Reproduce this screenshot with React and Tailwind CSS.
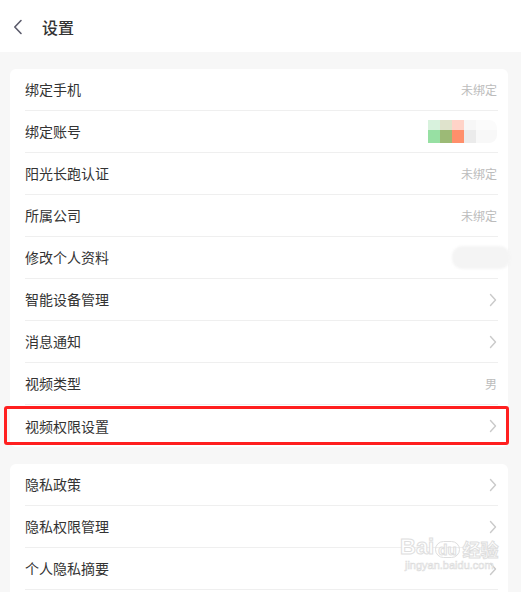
const FONT = "font-['Noto_Sans_CJK_SC','Noto_Sans',sans-serif]"

const group1 = [
  { label: '绑定手机', value: '未绑定' },
  { label: '绑定账号', value: 'mosaic' },
  { label: '阳光长跑认证', value: '未绑定' },
  { label: '所属公司', value: '未绑定' },
  { label: '修改个人资料', value: 'blur' },
  { label: '智能设备管理', arrow: true },
  { label: '消息通知', arrow: true },
  { label: '视频类型', value: '男' },
  { label: '视频权限设置', arrow: true, marked: true },
]

const group2 = [
  { label: '隐私政策', arrow: true },
  { label: '隐私权限管理', arrow: true },
  { label: '个人隐私摘要', arrow: true },
]

function Chevron() {
  return (
    <svg width="8" height="14" viewBox="0 0 8 14" fill="none" className="shrink-0">
      <path d="M1.5 1.5 L6.5 7 L1.5 12.5" stroke="#cacaca" strokeWidth="1.4" strokeLinecap="round" strokeLinejoin="round" />
    </svg>
  )
}

function Mosaic() {
  const top = ['#d8f2dd', '#dfe3cc', '#ffd3c8', '#f7f7f7', '#fbfbfb']
  const mid = ['#97e0a3', '#9cba76', '#ff8f6b', '#ebebeb', '#f8f8f8']
  return (
    <div className="flex flex-col blur-[0.4px]">
      <div className="flex">
        {top.map((c, i) => <div key={i} className={i === 4 ? 'w-[21px] h-[10px] rounded-tr-[8px]' : 'w-[12px] h-[10px]'} style={{ background: c }} />)}
      </div>
      <div className="flex">
        {mid.map((c, i) => <div key={i} className={i === 4 ? 'w-[21px] h-[13px] rounded-br-[8px]' : 'w-[12px] h-[13px]'} style={{ background: c }} />)}
      </div>
    </div>
  )
}

function Row({ item, last }) {
  return (
    <div className={`relative h-[42px] flex items-center justify-between pr-[1px] ${last ? '' : 'border-b border-[#efefef]'}`}>
      <span className="text-[14px] text-[#333]">{item.label}</span>
      {item.arrow && <Chevron />}
      {item.value === 'mosaic' && <Mosaic />}
      {item.value === 'blur' && <div className="w-[58px] h-[23px] rounded-[10px] bg-[#f4f4f4] mr-[-13px] blur-[1px]" />}
      {item.value && item.value !== 'mosaic' && item.value !== 'blur' && (
        <span className="text-[12px] text-[#bcbcbc]">{item.value}</span>
      )}
      {item.marked && (
        <div className="absolute left-[-21px] right-[-11px] top-[1px] bottom-[2px] border-[3px] border-[#ff1f1f] rounded-[3px]" />
      )}
    </div>
  )
}

export default function App() {
  return (
    <div className={`${FONT} w-[521px] h-[592px] overflow-hidden bg-[#f7f7f7] relative`}>
      <div className="h-[52px] bg-white flex items-center pl-[13px] pt-[2px]">
        <svg width="10" height="16" viewBox="0 0 10 16" fill="none">
          <path d="M8 1.5 L1.8 8 L8 14.5" stroke="#5b5b6b" strokeWidth="1.6" strokeLinecap="round" strokeLinejoin="round" />
        </svg>
        <span className="ml-[19px] text-[16px] font-medium text-[#333]">设置</span>
      </div>

      <div className="pl-[10px] pr-[13px] pt-[17px] flex flex-col gap-[17px]">
        <div className="bg-white rounded-[6px] pl-[15px] pr-[10px]">
          {group1.map((it, i) => <Row key={it.label} item={it} last={i === group1.length - 1} />)}
        </div>
        <div className="bg-white rounded-t-[6px] pl-[15px] pr-[10px] pb-[3px]">
          {group2.map((it) => <Row key={it.label} item={it} last={false} />)}
        </div>
      </div>

      <div className="absolute left-[400px] top-[536px] flex flex-col items-center pointer-events-none">
        <div className="flex items-end font-['Liberation_Sans',sans-serif] font-bold text-[22px] leading-none text-white [-webkit-text-stroke:1px_#dedede]">
          <span>Bai</span>
          <span className="mx-[1px] px-[2px] rounded-full border border-[#dedede] text-[15px]">du</span>
          <span className={`${FONT} text-[18px] ml-[2px]`}>经验</span>
        </div>
        <div className="font-['Liberation_Sans',sans-serif] text-[11px] leading-none mt-[2px] text-white [-webkit-text-stroke:0.6px_#dcdcdc]">jingyan.baidu.com</div>
      </div>
    </div>
  )
}
